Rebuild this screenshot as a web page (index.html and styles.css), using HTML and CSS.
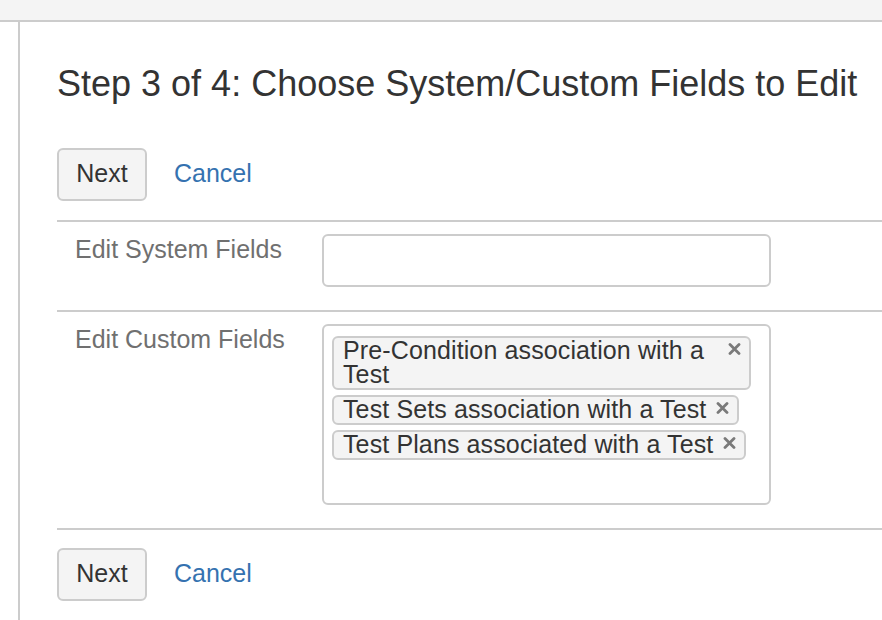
FILE: index.html
```html
<!DOCTYPE html>
<html lang="en">
<head>
<meta charset="utf-8">
<title>Step 3 of 4</title>
<link rel="stylesheet" href="styles.css">
</head>
<body>
<div class="topbar"></div>
<div class="page">
  <div class="sidebar"></div>
  <main class="content">
    <h2 class="title">Step 3 of 4: Choose System/Custom Fields to Edit</h2>
    <div class="actions actions-top">
      <button class="btn" type="button">Next</button>
      <a class="cancel" href="#">Cancel</a>
    </div>
    <div class="field-row">
      <label class="field-label">Edit System Fields</label>
      <div class="field"><div class="text-input"></div></div>
    </div>
    <div class="field-row">
      <label class="field-label">Edit Custom Fields</label>
      <div class="field">
        <div class="multi">
          <div class="tags">
            <span class="tag">Pre-Condition association with a Test<span class="remove"><svg width="13" height="12" viewBox="0 0 13 12"><path d="M2 1.5 L11 10.5 M11 1.5 L2 10.5" stroke="currentColor" stroke-width="2.8" stroke-linecap="round"/></svg></span></span>
            <span class="tag">Test Sets association with a Test<span class="remove"><svg width="13" height="12" viewBox="0 0 13 12"><path d="M2 1.5 L11 10.5 M11 1.5 L2 10.5" stroke="currentColor" stroke-width="2.8" stroke-linecap="round"/></svg></span></span>
            <span class="tag">Test Plans associated with a Test<span class="remove"><svg width="13" height="12" viewBox="0 0 13 12"><path d="M2 1.5 L11 10.5 M11 1.5 L2 10.5" stroke="currentColor" stroke-width="2.8" stroke-linecap="round"/></svg></span></span>
          </div>
          <div class="search"></div>
        </div>
      </div>
    </div>
    <div class="actions actions-bottom">
      <button class="btn" type="button">Next</button>
      <a class="cancel" href="#">Cancel</a>
    </div>
  </main>
</div>
</body>
</html>
```
FILE: styles.css
```css
html, body {
  margin: 0;
  padding: 0;
  background: #fff;
  font-family: "Liberation Sans", Arial, sans-serif;
  color: #333;
  overflow: hidden;
}

.topbar {
  height: 20px;
  background: #f4f4f4;
  border-bottom: 2px solid #ccc;
}

.page {
  display: flex;
  min-height: 598px;
}

.sidebar {
  width: 18px;
  flex: 0 0 18px;
  border-right: 2px solid #ccc;
}

.content {
  flex: 1 1 auto;
  padding-left: 37px;
  min-width: 0;
}

.title {
  margin: 41px 0 0;
  font-size: 36px;
  line-height: 42px;
  font-weight: normal;
  color: #333;
  white-space: nowrap;
}

.actions {
  display: flex;
  align-items: center;
}

.actions-top {
  margin-top: 43px;
  margin-bottom: 19px;
}

.actions-bottom {
  border-top: 2px solid #ccc;
  padding-top: 18px;
}

.btn {
  box-sizing: border-box;
  width: 90px;
  height: 53px;
  padding: 0 0 2px;
  background: #f4f4f4;
  border: 2px solid #ccc;
  border-radius: 6px;
  font-family: inherit;
  font-size: 25px;
  color: #333;
}

.cancel {
  margin-left: 27px;
  padding-bottom: 2px;
  font-size: 25px;
  color: #3572b0;
  text-decoration: none;
}

.field-row {
  display: flex;
  border-top: 2px solid #ccc;
  padding: 12px 0 23px;
}

.field-label {
  box-sizing: border-box;
  width: 265px;
  flex: 0 0 265px;
  padding: 3px 0 0 18px;
  font-size: 25px;
  line-height: 25px;
  color: #707070;
}

.field {
  width: 449px;
  flex: 0 0 449px;
}

.text-input {
  box-sizing: border-box;
  height: 53px;
  border: 2px solid #ccc;
  border-radius: 6px;
}

.multi {
  box-sizing: border-box;
  height: 181px;
  border: 2px solid #ccc;
  border-radius: 6px;
  padding: 10px 18px 10px 8px;
}

.tags {
  display: flex;
  flex-direction: column;
  align-items: flex-start;
  gap: 5px;
}

.tag {
  position: relative;
  background: #f4f4f4;
  border: 2px solid #ccc;
  border-radius: 6px;
  padding: 0 31px 2px 9px;
  font-size: 25px;
  letter-spacing: 0.12px;
  line-height: 24px;
  color: #333;
}

.remove {
  position: absolute;
  right: 8px;
  top: 5px;
  width: 13px;
  height: 12px;
  color: #7a7a7a;
  line-height: 0;
}

.search {
  height: 34px;
}
```
